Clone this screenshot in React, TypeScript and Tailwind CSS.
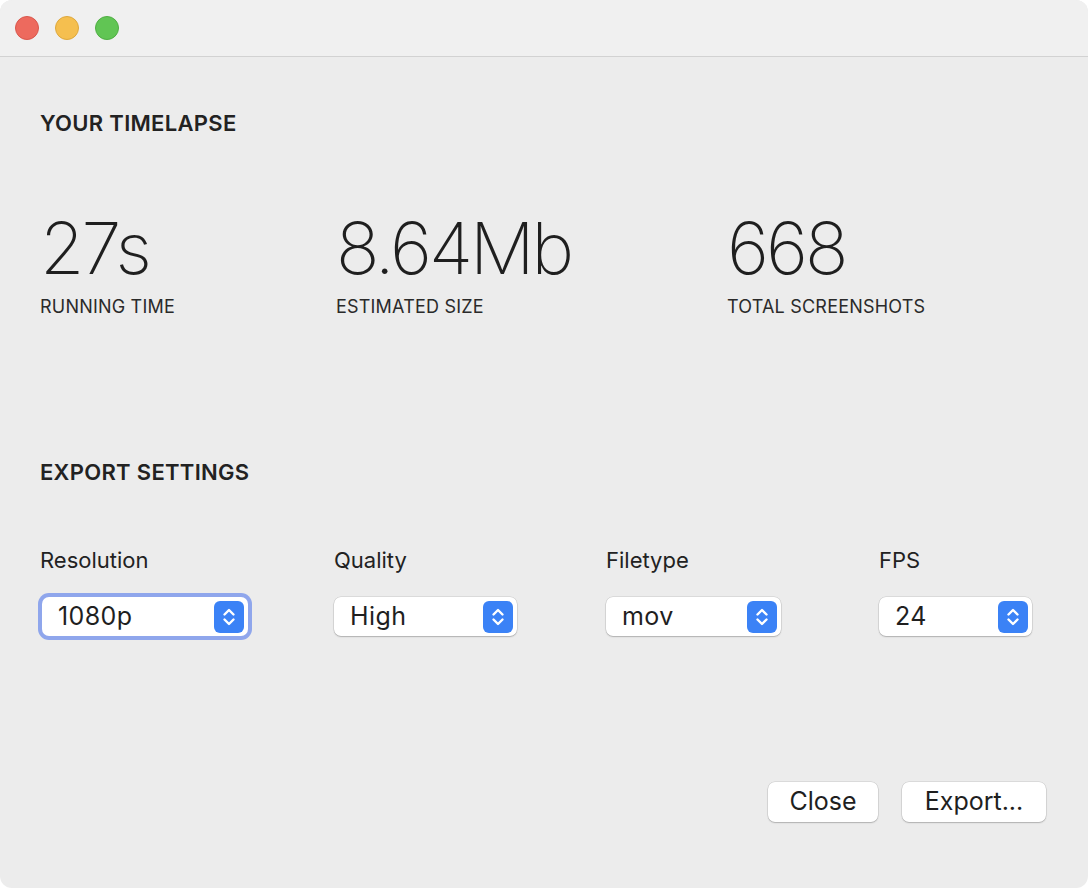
import React from 'react';

const font = { fontFamily: 'Inter, "Liberation Sans", sans-serif' };

function Stepper() {
  return (
    <div className="w-[30px] h-[32px] rounded-[6px] bg-[#3b82f6] flex items-center justify-center shrink-0">
      <svg width="16" height="24" viewBox="0 0 16 24" fill="none" stroke="white" strokeWidth="2.4" strokeLinecap="round" strokeLinejoin="round">
        <path d="M3.5 9.5 L8 5 L12.5 9.5" />
        <path d="M3.5 14.5 L8 19 L12.5 14.5" />
      </svg>
    </div>
  );
}

function Select({ value, width, focused = false }: { value: string; width: number; focused?: boolean }) {
  return (
    <div
      className={`h-[39px] rounded-[7px] bg-white flex items-center justify-between pl-[16px] pr-[4px] shadow-[0_0_0_0.5px_rgba(0,0,0,0.14),0_1px_1.5px_rgba(0,0,0,0.2)] ${focused ? 'ring-[4px] ring-[#8fa6ec]' : ''}`}
      style={{ width }}
    >
      <span className="text-[25px] tracking-[0.4px] text-[#1f1f1f]">{value}</span>
      <Stepper />
    </div>
  );
}

function Stat({ value, label, width }: { value: string; label: string; width?: number }) {
  return (
    <div className="flex flex-col" style={width ? { width } : undefined}>
      <span className="text-[72px] leading-[76px] font-extralight text-[#1f1f1f] tracking-[-3px]">{value}</span>
      <span className="mt-[10px] text-[18px] leading-[22px] text-[#2a2a2a] tracking-[0.2px]">{label}</span>
    </div>
  );
}

export default function App() {
  const settings = [
    { label: 'Resolution', value: '1080p', width: 206, col: 294, focused: true },
    { label: 'Quality', value: 'High', width: 183, col: 272 },
    { label: 'Filetype', value: 'mov', width: 175, col: 273 },
    { label: 'FPS', value: '24', width: 153 },
  ];

  return (
    <div className="w-[1088px] h-[888px] bg-white" style={font}>
      <div className="h-full rounded-[12px] overflow-hidden bg-[#ececec] flex flex-col">
        {/* Title bar */}
        <div className="h-[57px] bg-[#f0f0f0] border-b border-[#d2d2d2] flex items-center gap-[16px] pl-[15px] shrink-0">
          <div className="w-[24px] h-[24px] rounded-full bg-[#ed6a5e] border border-[#d9574c]" />
          <div className="w-[24px] h-[24px] rounded-full bg-[#f5bf4f] border border-[#dea83c]" />
          <div className="w-[24px] h-[24px] rounded-full bg-[#61c554] border border-[#4fae43]" />
        </div>

        {/* Content */}
        <div className="flex-1 flex flex-col px-[40px]">
          <h2 className="mt-[54px] text-[22px] leading-[24px] font-semibold text-[#222] tracking-[0.3px]">YOUR TIMELAPSE</h2>

          <div className="mt-[75px] flex">
            <Stat value="27s" label="RUNNING TIME" width={296} />
            <Stat value="8.64Mb" label="ESTIMATED SIZE" width={391} />
            <Stat value="668" label="TOTAL SCREENSHOTS" />
          </div>

          <h2 className="mt-[142px] text-[22px] leading-[24px] font-semibold text-[#222] tracking-[0.3px]">EXPORT SETTINGS</h2>

          <div className="mt-[64px] flex">
            {settings.map((s) => (
              <div key={s.label} className="flex flex-col" style={s.col ? { width: s.col } : undefined}>
                <span className="text-[22px] leading-[24px] text-[#222]">{s.label}</span>
                <div className={`mt-[25px] ${s.focused ? 'pl-[2px]' : ''}`}>
                  <Select value={s.value} width={s.width} focused={s.focused} />
                </div>
              </div>
            ))}
          </div>

          <div className="mt-auto mb-[66px] flex justify-end gap-[24px] pr-[2px]">
            <button className="w-[110px] h-[40px] rounded-[7px] bg-white text-[25px] text-[#1f1f1f] shadow-[0_0_0_0.5px_rgba(0,0,0,0.14),0_1px_1.5px_rgba(0,0,0,0.2)]">Close</button>
            <button className="w-[144px] h-[40px] rounded-[7px] bg-white text-[25px] text-[#1f1f1f] shadow-[0_0_0_0.5px_rgba(0,0,0,0.14),0_1px_1.5px_rgba(0,0,0,0.2)]">Export...</button>
          </div>
        </div>
      </div>
    </div>
  );
}
